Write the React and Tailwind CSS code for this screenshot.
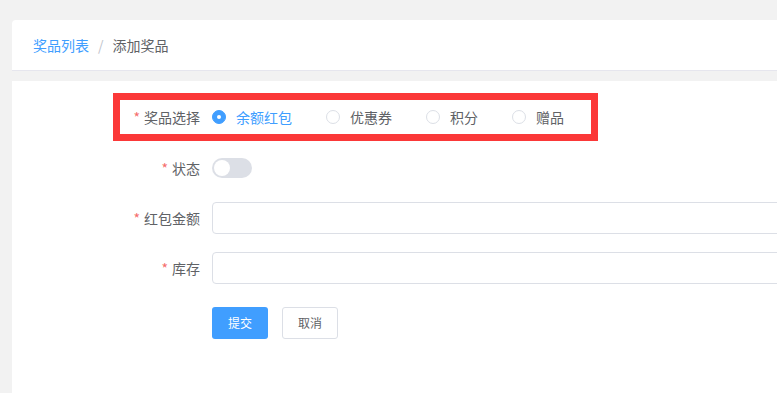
import React, { useState } from 'react';

const font = { fontFamily: '"Noto Sans CJK SC", "Noto Sans", sans-serif' };

function Label({ children }) {
    return (
        <div className="w-[92px] shrink-0 pr-3 text-right text-[14px] text-[#606266] leading-none whitespace-nowrap">
            <span className="text-[#f56c6c] mr-1">*</span>
            {children}
        </div>
    );
}

function Radio({ label, checked, onClick }) {
    return (
        <div className="flex items-center shrink-0 mr-[34px] cursor-pointer" onClick={onClick}>
            {checked ? (
                <span className="w-[14px] h-[14px] shrink-0 rounded-full bg-[#409eff] border border-[#409eff] flex items-center justify-center">
                    <span className="w-[4px] h-[4px] rounded-full bg-white" />
                </span>
            ) : (
                <span className="w-[14px] h-[14px] shrink-0 rounded-full bg-white border border-[#dcdfe6]" />
            )}
            <span className={`pl-[10px] text-[14px] leading-none whitespace-nowrap ${checked ? 'text-[#409eff]' : 'text-[#606266]'}`}>{label}</span>
        </div>
    );
}

export default function App() {
    const [prize, setPrize] = useState('余额红包');
    const options = ['余额红包', '优惠券', '积分', '赠品'];

    return (
        <div className="w-[777px] h-[393px] overflow-hidden bg-[#f2f2f2] pl-3 pt-5" style={font}>
            <div className="h-[51px] bg-white rounded-tl-[4px] border-b border-[#e6e6ee] flex items-center pl-[21px] text-[14px]">
                <span className="text-[#409eff]">奖品列表</span>
                <span className="text-[#c0c4cc] mx-[9px]">/</span>
                <span className="text-[#606266]">添加奖品</span>
            </div>

            <div className="mt-[10px] h-[400px] bg-white pl-[101px] pt-3">
                <div className="w-[485px] border-[7px] border-[#fb3838] h-[48px] flex items-center">
                    <Label>奖品选择</Label>
                    <div className="flex items-center">
                        {options.map((o) => (
                            <Radio key={o} label={o} checked={prize === o} onClick={() => setPrize(o)} />
                        ))}
                    </div>
                </div>

                <div className="pl-[7px] mt-[11px] h-[32px] flex items-center">
                    <Label>状态</Label>
                    <div className="w-[40px] h-[20px] shrink-0 rounded-full bg-[#dcdfe6] relative">
                        <span className="absolute left-[2px] top-[2px] w-[16px] h-[16px] rounded-full bg-white" />
                    </div>
                </div>

                <div className="pl-[7px] mt-[18px] h-[32px] flex items-center">
                    <Label>红包金额</Label>
                    <input className="w-[700px] shrink-0 h-[32px] rounded-[4px] border border-[#dcdfe6] outline-none px-3 text-[14px]" />
                </div>

                <div className="pl-[7px] mt-[18px] h-[32px] flex items-center">
                    <Label>库存</Label>
                    <input className="w-[700px] shrink-0 h-[32px] rounded-[4px] border border-[#dcdfe6] outline-none px-3 text-[14px]" />
                </div>

                <div className="pl-[99px] mt-[23px] flex gap-[14px]">
                    <button className="w-[56px] h-[32px] rounded-[3px] bg-[#409eff] text-white text-[12px]">提交</button>
                    <button className="w-[56px] h-[32px] rounded-[3px] bg-white border border-[#dcdfe6] text-[#606266] text-[12px]">取消</button>
                </div>
            </div>
        </div>
    );
}
